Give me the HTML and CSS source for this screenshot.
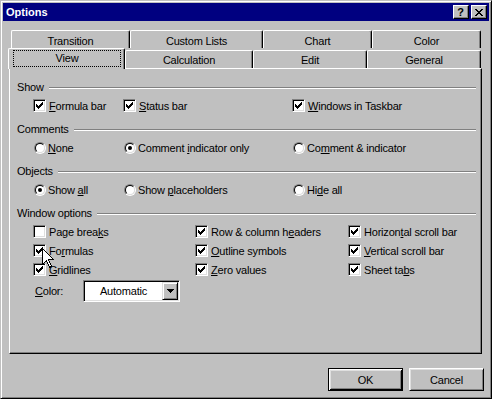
FILE: index.html
```html
<!DOCTYPE html>
<html>
<head>
<meta charset="utf-8">
<title>Options</title>
<link rel="stylesheet" href="styles.css">
</head>
<body>
<div class="window">
  <div class="titlebar">
    <span class="title">Options</span>
    <div class="tbtns">
      <span class="tbtn help">?</span>
      <span class="tbtn close"><svg width="8" height="7" viewBox="0 0 8 7" shape-rendering="crispEdges"><path d="M0 0h2v1H0zM6 0h2v1H6zM1 1h2v1H1zM5 1h2v1H5zM2 2h4v1H2zM3 3h2v1H3zM2 4h4v1H2zM1 5h2v1H1zM5 5h2v1H5zM0 6h2v1H0zM6 6h2v1H6z"/></svg></span>
    </div>
  </div>

  <div class="tabs">
    <div class="tabrow back">
      <div class="tab t119">Transition</div>
      <div class="tab t133">Custom Lists</div>
      <div class="tab t109">Chart</div>
      <div class="tab t109">Color</div>
    </div>
    <div class="tabrow front">
      <div class="tab sel t117"><span class="focus">View</span></div>
      <div class="tab t128">Calculation</div>
      <div class="tab t114">Edit</div>
      <div class="tab t114">General</div>
    </div>
  </div>

  <div class="panel">
    <div class="group">
      <div class="ghead"><span>Show</span><i class="rule"></i></div>
      <div class="row cols-a">
        <div class="item"><span class="cb"><svg class="chk" width="7" height="7" viewBox="0 0 7 7" shape-rendering="crispEdges"><path d="M0 2h1v3H0zM1 3h1v3H1zM2 4h1v3H2zM3 3h1v3H3zM4 2h1v3H4zM5 1h1v3H5zM6 0h1v3H6z"/></svg></span><span class="lbl"><u>F</u>ormula bar</span></div>
        <div class="item"><span class="cb"><svg class="chk" width="7" height="7" viewBox="0 0 7 7" shape-rendering="crispEdges"><path d="M0 2h1v3H0zM1 3h1v3H1zM2 4h1v3H2zM3 3h1v3H3zM4 2h1v3H4zM5 1h1v3H5zM6 0h1v3H6z"/></svg></span><span class="lbl"><u>S</u>tatus bar</span></div>
        <div class="item"><span class="cb"><svg class="chk" width="7" height="7" viewBox="0 0 7 7" shape-rendering="crispEdges"><path d="M0 2h1v3H0zM1 3h1v3H1zM2 4h1v3H2zM3 3h1v3H3zM4 2h1v3H4zM5 1h1v3H5zM6 0h1v3H6z"/></svg></span><span class="lbl"><u>W</u>indows in Taskbar</span></div>
      </div>
    </div>

    <div class="group">
      <div class="ghead"><span>Comments</span><i class="rule"></i></div>
      <div class="row cols-a">
        <div class="item"><span class="rb"><i></i></span><span class="lbl rl"><u>N</u>one</span></div>
        <div class="item"><span class="rb on"><i></i></span><span class="lbl rl">Comment <u>i</u>ndicator only</span></div>
        <div class="item"><span class="rb"><i></i></span><span class="lbl rl">Co<u>m</u>ment &amp; indicator</span></div>
      </div>
    </div>

    <div class="group">
      <div class="ghead"><span>Objects</span><i class="rule"></i></div>
      <div class="row cols-a">
        <div class="item"><span class="rb on"><i></i></span><span class="lbl rl">Show <u>a</u>ll</span></div>
        <div class="item"><span class="rb"><i></i></span><span class="lbl rl">Show <u>p</u>laceholders</span></div>
        <div class="item"><span class="rb"><i></i></span><span class="lbl rl">Hi<u>d</u>e all</span></div>
      </div>
    </div>

    <div class="group">
      <div class="ghead"><span>Window options</span><i class="rule"></i></div>
      <div class="row cols-b">
        <div class="item"><span class="cb"></span><span class="lbl">Page brea<u>k</u>s</span></div>
        <div class="item"><span class="cb"><svg class="chk" width="7" height="7" viewBox="0 0 7 7" shape-rendering="crispEdges"><path d="M0 2h1v3H0zM1 3h1v3H1zM2 4h1v3H2zM3 3h1v3H3zM4 2h1v3H4zM5 1h1v3H5zM6 0h1v3H6z"/></svg></span><span class="lbl">Row &amp; column h<u>e</u>aders</span></div>
        <div class="item"><span class="cb"><svg class="chk" width="7" height="7" viewBox="0 0 7 7" shape-rendering="crispEdges"><path d="M0 2h1v3H0zM1 3h1v3H1zM2 4h1v3H2zM3 3h1v3H3zM4 2h1v3H4zM5 1h1v3H5zM6 0h1v3H6z"/></svg></span><span class="lbl">Horizon<u>t</u>al scroll bar</span></div>
      </div>
      <div class="row cols-b">
        <div class="item"><span class="cb"><svg class="chk" width="7" height="7" viewBox="0 0 7 7" shape-rendering="crispEdges"><path d="M0 2h1v3H0zM1 3h1v3H1zM2 4h1v3H2zM3 3h1v3H3zM4 2h1v3H4zM5 1h1v3H5zM6 0h1v3H6z"/></svg></span><span class="lbl">Fo<u>r</u>mulas</span></div>
        <div class="item"><span class="cb"><svg class="chk" width="7" height="7" viewBox="0 0 7 7" shape-rendering="crispEdges"><path d="M0 2h1v3H0zM1 3h1v3H1zM2 4h1v3H2zM3 3h1v3H3zM4 2h1v3H4zM5 1h1v3H5zM6 0h1v3H6z"/></svg></span><span class="lbl"><u>O</u>utline symbols</span></div>
        <div class="item"><span class="cb"><svg class="chk" width="7" height="7" viewBox="0 0 7 7" shape-rendering="crispEdges"><path d="M0 2h1v3H0zM1 3h1v3H1zM2 4h1v3H2zM3 3h1v3H3zM4 2h1v3H4zM5 1h1v3H5zM6 0h1v3H6z"/></svg></span><span class="lbl"><u>V</u>ertical scroll bar</span></div>
      </div>
      <div class="row cols-b">
        <div class="item"><span class="cb"><svg class="chk" width="7" height="7" viewBox="0 0 7 7" shape-rendering="crispEdges"><path d="M0 2h1v3H0zM1 3h1v3H1zM2 4h1v3H2zM3 3h1v3H3zM4 2h1v3H4zM5 1h1v3H5zM6 0h1v3H6z"/></svg></span><span class="lbl"><u>G</u>ridlines</span></div>
        <div class="item"><span class="cb"><svg class="chk" width="7" height="7" viewBox="0 0 7 7" shape-rendering="crispEdges"><path d="M0 2h1v3H0zM1 3h1v3H1zM2 4h1v3H2zM3 3h1v3H3zM4 2h1v3H4zM5 1h1v3H5zM6 0h1v3H6z"/></svg></span><span class="lbl"><u>Z</u>ero values</span></div>
        <div class="item"><span class="cb"><svg class="chk" width="7" height="7" viewBox="0 0 7 7" shape-rendering="crispEdges"><path d="M0 2h1v3H0zM1 3h1v3H1zM2 4h1v3H2zM3 3h1v3H3zM4 2h1v3H4zM5 1h1v3H5zM6 0h1v3H6z"/></svg></span><span class="lbl">Sheet ta<u>b</u>s</span></div>
      </div>
      <div class="colorrow">
        <span class="clabel"><u>C</u>olor:</span>
        <div class="select">
          <span class="val">Automatic</span>
          <span class="arrow"><svg width="7" height="4" viewBox="0 0 7 4" shape-rendering="crispEdges"><path d="M0 0h7v1H0zM1 1h5v1H1zM2 2h3v1H2zM3 3h1v1H3z"/></svg></span>
        </div>
      </div>
    </div>
  </div>

  <div class="buttons">
    <div class="btn default">OK</div>
    <div class="btn">Cancel</div>
  </div>

  <svg class="cursor" width="13" height="20" viewBox="0 0 13 20" shape-rendering="crispEdges"><polygon points="0.5,0.5 0.5,16.5 4.5,12.5 7.5,19.5 9.5,18.5 6.5,11.5 11.5,11.5" fill="#fff" stroke="#000" stroke-width="1"/></svg>
</div>
</body>
</html>
```

FILE: styles.css
```css
html, body {
  margin: 0;
  padding: 0;
  background: #c0c0c0;
}

body {
  font-family: "Liberation Sans", Arial, sans-serif;
  font-size: 11px;
  letter-spacing: -0.2px;
  color: #000;
}

.window {
  position: relative;
  width: 492px;
  height: 399px;
  box-sizing: border-box;
  background: #c0c0c0;
  border: 1px solid;
  border-color: #c0c0c0 #000 #000 #c0c0c0;
  box-shadow: inset 1px 1px #fff, inset -1px -1px #808080;
  padding: 2px;
}

.titlebar {
  height: 18px;
  background: #000080;
  display: flex;
  align-items: center;
  justify-content: space-between;
  padding: 0 2px 0 3px;
}

.title {
  color: #fff;
  font-weight: bold;
  font-size: 11px;
  letter-spacing: 0;
  line-height: 18px;
}

.tbtns {
  display: flex;
  gap: 2px;
}

.tbtn {
  width: 16px;
  height: 14px;
  box-sizing: border-box;
  background: #c0c0c0;
  border: 1px solid;
  border-color: #fff #000 #000 #fff;
  box-shadow: inset -1px -1px #808080;
  display: flex;
  align-items: center;
  justify-content: center;
}

.help {
  font-weight: bold;
  font-size: 11px;
  line-height: 12px;
  padding-right: 1px;
}

.close svg {
  display: block;
  margin-right: 1px;
}

.tabs {
  margin-top: 7px;
}

.tabrow {
  display: flex;
  align-items: flex-end;
  height: 20px;
}

.tabrow.back {
  margin-left: 8px;
}

.tabrow.front {
  margin-left: 5px;
}

.tab {
  height: 18px;
  box-sizing: border-box;
  border-top: 1px solid #fff;
  border-left: 1px solid #fff;
  border-right: 1px solid #000;
  box-shadow: inset -1px 0 #808080;
  border-radius: 2px 2px 0 0;
  text-align: center;
  line-height: 14px;
  padding-top: 2px;
}

.back .tab {
  padding-top: 3px;
}

.tab.sel {
  height: 21px;
  margin-bottom: -1px;
  position: relative;
  z-index: 1;
  background: #c0c0c0;
  padding-top: 0;
}

.focus {
  display: block;
  margin: 1px 3px 0 4px;
  height: 17px;
  box-sizing: border-box;
  border: 1px dotted #000;
  line-height: 14px;
}

.t109 { width: 109px; }
.t114 { width: 114px; }
.t117 { width: 117px; }
.t119 { width: 119px; }
.t128 { width: 128px; }
.t133 { width: 133px; }

.panel {
  margin-left: 6px;
  width: 473px;
  height: 286px;
  box-sizing: border-box;
  border: 1px solid;
  border-color: #fff #000 #000 #fff;
  box-shadow: inset -1px -1px #808080;
  padding: 11px 5px 0 7px;
}

.group {
  margin-bottom: 7px;
}

.ghead {
  display: flex;
  height: 14px;
  line-height: 14px;
  margin-bottom: 2px;
}

.rule {
  flex: 1;
  height: 0;
  margin-top: 7px;
  margin-left: 5px;
  border-top: 1px solid #808080;
  border-bottom: 1px solid #fff;
}

.row {
  display: grid;
  height: 19px;
  margin-left: 16px;
  align-items: center;
}

.cols-a {
  grid-template-columns: 90px 169px 1fr;
}

.cols-b {
  grid-template-columns: 162px 153px 1fr;
}

.item {
  display: flex;
  align-items: center;
  white-space: nowrap;
}

.cb {
  width: 13px;
  height: 13px;
  box-sizing: border-box;
  border: 1px solid;
  border-color: #808080 #fff #fff #808080;
  box-shadow: inset 1px 1px #000, inset -1px -1px #dfdfdf;
  background: #fff;
  display: flex;
  align-items: center;
  justify-content: center;
  flex: none;
}

.chk {
  display: block;
}

.lbl {
  margin-left: 3px;
  line-height: 14px;
}

.lbl.rl {
  margin-left: 2px;
}

.rb {
  width: 12px;
  height: 12px;
  margin-left: 1px;
  box-sizing: border-box;
  border-radius: 50%;
  border: 1px solid;
  border-color: #808080 #fff #fff #808080;
  display: flex;
  flex: none;
}

.rb i {
  flex: 1;
  border-radius: 50%;
  border: 1px solid;
  border-color: #000 #dfdfdf #dfdfdf #000;
  background: #fff;
  display: flex;
  align-items: center;
  justify-content: center;
}

.rb.on i::after {
  content: "";
  width: 4px;
  height: 4px;
  border-radius: 50%;
  background: #000;
}

u {
  text-decoration: underline;
  text-underline-offset: 1px;
}

.colorrow {
  display: flex;
  align-items: center;
  margin-top: 1px;
  margin-left: 18px;
}

.clabel {
  width: 48px;
}

.select {
  width: 97px;
  height: 22px;
  box-sizing: border-box;
  border: 1px solid;
  border-color: #808080 #fff #fff #808080;
  box-shadow: inset 1px 1px #000, inset -1px -1px #dfdfdf;
  padding: 1px;
  background: #fff;
  display: flex;
}

.val {
  flex: 1;
  text-align: center;
  line-height: 18px;
}

.arrow {
  width: 16px;
  height: 18px;
  box-sizing: border-box;
  background: #c0c0c0;
  border: 1px solid;
  border-color: #dfdfdf #000 #000 #dfdfdf;
  box-shadow: inset 1px 1px #fff, inset -1px -1px #808080;
  display: flex;
  align-items: center;
  justify-content: center;
}

.arrow svg {
  display: block;
}

.buttons {
  display: flex;
  justify-content: flex-end;
  gap: 6px;
  margin-top: 14px;
  padding-right: 5px;
}

.btn {
  width: 75px;
  height: 23px;
  box-sizing: border-box;
  background: #c0c0c0;
  border: 1px solid;
  border-color: #fff #000 #000 #fff;
  box-shadow: inset 1px 1px #dfdfdf, inset -1px -1px #808080;
  display: flex;
  align-items: center;
  justify-content: center;
}

.btn.default {
  border-color: #000;
  box-shadow: inset 1px 1px #fff, inset -1px -1px #000, inset 2px 2px #dfdfdf, inset -2px -2px #808080;
}

.cursor {
  position: absolute;
  left: 41px;
  top: 247px;
}
```
